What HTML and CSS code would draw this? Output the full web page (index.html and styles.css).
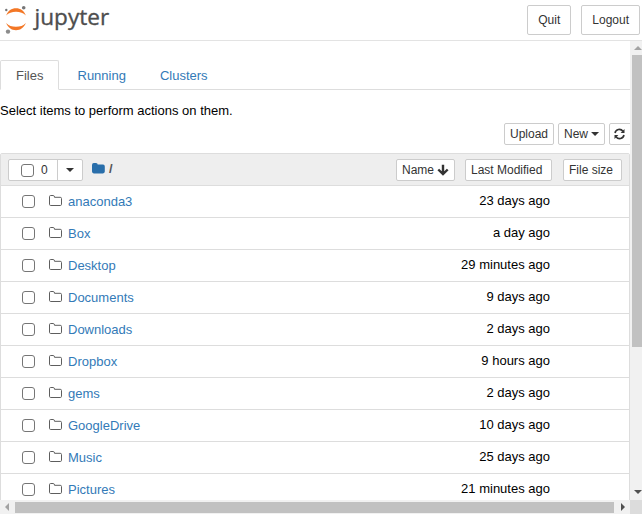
FILE: index.html
```html
<!DOCTYPE html>
<html lang="en">
<head>
<meta charset="utf-8">
<title>Home</title>
<link rel="stylesheet" href="styles.css">
</head>
<body>
<svg width="0" height="0" class="defs" aria-hidden="true">
  <symbol id="folder" viewBox="0 0 13 12"><path d="M.5 1.700Q.5.5 1.600.5H4.300Q5.500.5 5.500 2.300H11.200Q12.500 2.300 12.500 3.500V9.300Q12.500 10.500 11.300 10.500H1.700Q.5 10.500.5 9.300Z" fill="none" stroke="currentColor"/></symbol>
</svg>
<header class="top">
  <div class="logo">
    <svg width="34" height="40" viewBox="0 0 34 40">
      <path d="M6.2 15.500C8 10.800 11.500 8.300 16 8.300S24 10.800 25.800 15.500C23.500 12.800 20 11.700 16 11.700S8.500 12.800 6.200 15.500Z" fill="#f37726"/>
      <path d="M6.200 23C8 27.700 11.500 30.200 16 30.200S24 27.700 25.800 23C23.500 25.700 20 26.800 16 26.800S8.500 25.700 6.200 23Z" fill="#f37726"/>
      <circle cx="23.700" cy="7.800" r="1.800" fill="#767677"/><circle cx="6.300" cy="10" r="1.200" fill="#767677"/><circle cx="8" cy="31.600" r="2.200" fill="#8c8c8c"/>
    </svg>
    <span class="word">jupyter</span>
  </div>
  <button class="btn big">Quit</button>
  <button class="btn big">Logout</button>
</header>
<div class="view">
  <main class="page">
    <nav class="tabs"><a class="tab active">Files</a><a class="tab">Running</a><a class="tab">Clusters</a></nav>
    <p class="hint">Select items to perform actions on them.</p>
    <div class="tools">
      <button class="btn">Upload</button>
      <button class="btn">New<i class="caret"></i></button>
      <button class="btn refresh"><svg width="11" height="12" viewBox="0 0 11 12"><g fill="none" stroke="#333" stroke-width="1.600"><path d="M1 5A4.400 4.400 0 0 1 8.900 3.300"/><path d="M10 7A4.400 4.400 0 0 1 2.100 8.700"/></g><path d="M10.500 1V4.900H6.600ZM.5 11V7.100H4.400Z" fill="#333"/></svg></button>
    </div>
    <section class="list">
      <div class="head">
        <div class="select"><label><i class="check"></i>0</label><span class="drop"><i class="caret"></i></span></div>
        <svg class="home" width="13" height="11" viewBox="0 0 13 11"><path d="M0 2Q0 0 1.800 0H4Q5.700 0 5.700 1.600H11Q12.800 1.600 12.800 3.400V8.600Q12.800 10.400 11 10.400H1.800Q0 10.400 0 8.600Z" fill="#296eaa"/></svg>
        <span class="slash">/</span>
        <button class="btn name">Name<svg width="12" height="12" viewBox="0 0 12 12"><path d="M6 .8V10M1.300 5.500L6 10.100L10.700 5.500" fill="none" stroke="#333" stroke-width="2.400"/></svg></button>
        <button class="btn modified">Last Modified</button>
        <button class="btn size">File size</button>
      </div>
      <div class="row"><i class="check"></i><svg class="icon"><use href="#folder"/></svg><a>anaconda3</a><time>23 days ago</time></div>
      <div class="row"><i class="check"></i><svg class="icon"><use href="#folder"/></svg><a>Box</a><time>a day ago</time></div>
      <div class="row"><i class="check"></i><svg class="icon"><use href="#folder"/></svg><a>Desktop</a><time>29 minutes ago</time></div>
      <div class="row"><i class="check"></i><svg class="icon"><use href="#folder"/></svg><a>Documents</a><time>9 days ago</time></div>
      <div class="row"><i class="check"></i><svg class="icon"><use href="#folder"/></svg><a>Downloads</a><time>2 days ago</time></div>
      <div class="row"><i class="check"></i><svg class="icon"><use href="#folder"/></svg><a>Dropbox</a><time>9 hours ago</time></div>
      <div class="row"><i class="check"></i><svg class="icon"><use href="#folder"/></svg><a>gems</a><time>2 days ago</time></div>
      <div class="row"><i class="check"></i><svg class="icon"><use href="#folder"/></svg><a>GoogleDrive</a><time>10 days ago</time></div>
      <div class="row"><i class="check"></i><svg class="icon"><use href="#folder"/></svg><a>Music</a><time>25 days ago</time></div>
      <div class="row"><i class="check"></i><svg class="icon"><use href="#folder"/></svg><a>Pictures</a><time>21 minutes ago</time></div>
    </section>
  </main>
  <div class="vbar"><i class="arrow up"></i><i class="vthumb"></i><i class="arrow down"></i></div>
  <div class="hbar"><i class="arrow left"></i><i class="hthumb"></i><i class="arrow right"></i></div>
  <div class="corner"></div>
</div>
</body>
</html>
```

FILE: styles.css
```css
* { box-sizing: border-box; }
body { margin: 0; width: 642px; height: 514px; overflow: hidden; background: #fff; color: #000; font: 13px/20px "Liberation Sans", Arial, sans-serif; }
.defs { position: absolute; }
svg { display: block; flex: none; }
.top { height: 41px; display: flex; align-items: flex-start; border-bottom: 1px solid #e3e3e3; padding: 5px 2px 0 0; gap: 10px; }
.logo { display: flex; margin: -5px auto 0 0; height: 40px; }
.word { font: 22.6px/38px "Open Sans", sans-serif; color: #4e4e4e; -webkit-text-stroke: .35px #4e4e4e; height: 38px; margin: -2px 0 0 .5px; clip-path: inset(11px -2px 0 -8px); }
.btn { font: 12px/18px "Liberation Sans", Arial, sans-serif; color: #333; background: #fff; border: 1px solid #ccc; border-radius: 2px; height: 22px; padding: 1px 5px; margin: 0; display: flex; align-items: center; flex: none; white-space: nowrap; }
.big { height: 30px; padding: 5px 10px; }
.view { display: grid; grid-template: 459px 14px / 630px 12px; }
.page { overflow: hidden; padding-top: 19px; }
.tabs { display: flex; height: 30px; border-bottom: 1px solid #ddd; }
.tab { height: 30px; padding: 6px 16px 0; margin-right: 2px; color: #337ab7; }
.tab.active { width: 59px; padding: 5px 15px 0; margin-right: 2.5px; color: #555; background: #fff; border: 1px solid #ddd; border-bottom-color: #fff; border-radius: 2px 2px 0 0; }
.hint { margin: 11px 0 0; }
.tools { display: flex; margin: 2px 0 0 504px; gap: 4px; }
.caret { width: 8px; height: 4px; margin-left: 3px; background: #333; clip-path: polygon(0 0, 100% 0, 50% 100%); }
.refresh { width: 30px; padding-left: 4px; justify-content: flex-start; }
.list { border: 1px solid #ddd; border-radius: 2px 2px 0 0; margin-top: 8px; }
.head { height: 32px; background: #eee; border-bottom: 1px solid #ddd; display: flex; align-items: flex-start; padding: 5px 7px; }
.select { display: flex; width: 75px; height: 22px; background: #fff; border: 1px solid #ccc; border-radius: 2px; color: #333; font-size: 12px; }
.select label { display: flex; align-items: center; width: 49px; padding-left: 12px; border-right: 1px solid #ccc; }
.select .check { margin-right: 7px; }
.drop { display: flex; align-items: center; padding-left: 5px; }
.check { width: 13px; height: 13px; border: 1px solid #767676; border-radius: 3px; background: #fff; flex: none; }
.home { margin: 4px 4px 0 9px; }
.slash { width: 4px; font-weight: bold; color: #555; line-height: 19px; }
.name { margin-left: 283px; width: 59px; }
.name svg { margin-left: 3px; }
.modified { margin-left: 10px; width: 87px; }
.size { margin-left: 11px; width: 59px; }
.row { height: 32px; display: flex; align-items: center; border-bottom: 1px solid #ddd; padding: 0 79px 0 21px; }
.row a { color: #337ab7; margin-left: 6px; }
.row time { margin-left: auto; margin-top: -2px; }
.icon { width: 13px; height: 12px; color: #5e5e5e; margin: -1px 0 0 14px; }
.vbar { background: #f1f1f1; display: flex; flex-direction: column; overflow: hidden; padding: 5px 0 6px 4px; }
.arrow { flex: none; background: #505050; }
.up { width: 8px; height: 4px; background: #a3a3a3; clip-path: polygon(50% 0, 100% 100%, 0 100%); }
.vthumb { width: 10px; height: 292px; margin: 5px 0 auto -2px; background: #c1c1c1; }
.down { width: 8px; height: 4px; clip-path: polygon(0 0, 100% 0, 50% 100%); }
.hbar { background: #f1f1f1; display: flex; align-items: center; padding-left: 5px; }
.left { width: 4px; height: 8px; background: #a3a3a3; clip-path: polygon(100% 0, 100% 100%, 0 50%); }
.hthumb { width: 599px; height: 11px; margin: 1px 7px 0 6px; background: #c1c1c1; }
.right { width: 4px; height: 8px; clip-path: polygon(0 0, 100% 50%, 0 100%); }
.corner { background: #dcdcdc; }
```
